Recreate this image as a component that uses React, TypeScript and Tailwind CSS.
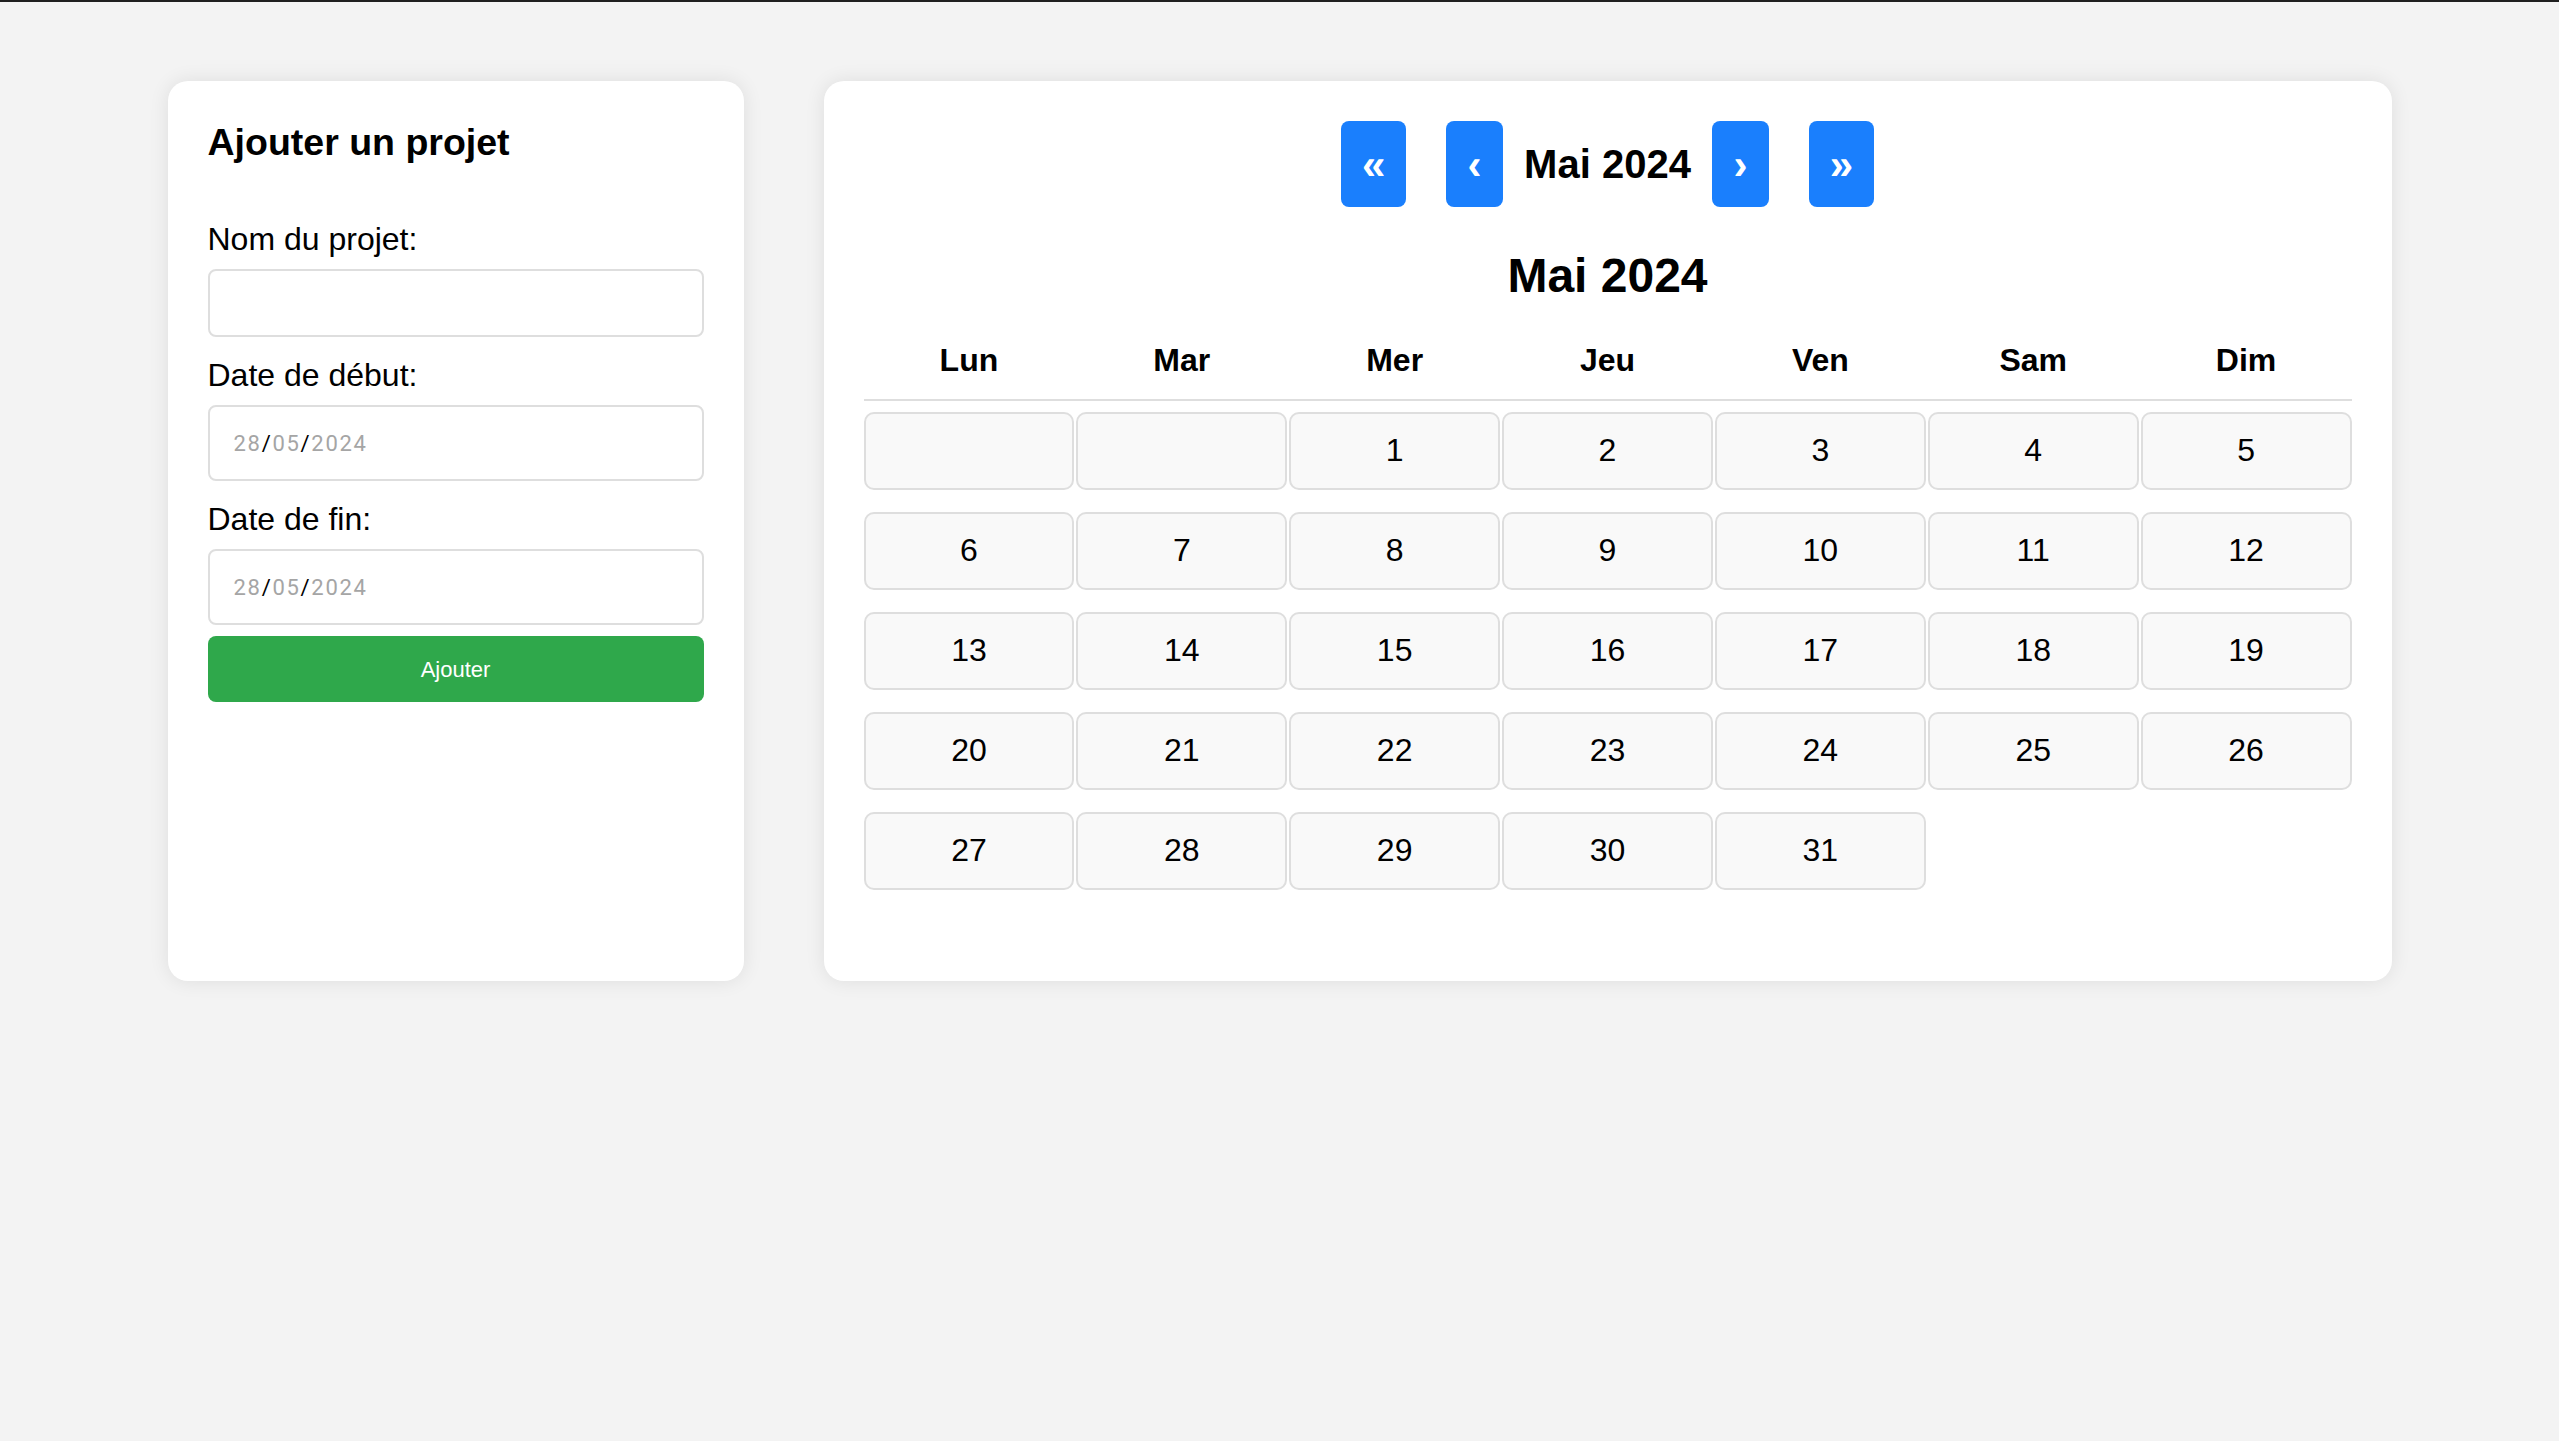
import React from 'react';

const weekdays = ['Lun', 'Mar', 'Mer', 'Jeu', 'Ven', 'Sam', 'Dim'];

// mai 2024 starts on a Wednesday
const days: (number | null)[] = [null, null, ...Array.from({ length: 31 }, (_, i) => i + 1)];

function DateField() {
  return (
    <div className="h-[76px] w-full rounded-[8px] border-2 border-[#dedede] bg-white flex items-center pl-[24px] mb-[10px] font-['Roboto',sans-serif] text-[22px] tracking-[1.7px] text-[#a5a5a5]">
      <span>28</span>
      <span className="text-black">/</span>
      <span>05</span>
      <span className="text-black">/</span>
      <span>2024</span>
    </div>
  );
}

function NavButton({ label, wide }: { label: string; wide?: boolean }) {
  return (
    <button
      className={`${wide ? 'w-[65px]' : 'w-[57px]'} h-[86px] rounded-[8px] bg-[#1a7ffd] text-white text-[42px] font-bold leading-none flex items-center justify-center pt-[2px]`}
    >
      {label}
    </button>
  );
}

export default function App() {
  return (
    <div className="min-h-screen bg-[#f3f3f3] font-['Liberation_Sans',Arial,sans-serif] text-black">
      <div className="h-[2px] bg-[#1f1f1f]" />
      <div className="flex justify-center gap-[80px] pt-[79px]">
        {/* Formulaire */}
        <div className="w-[576px] h-[900px] bg-white rounded-[20px] shadow-[0_0_20px_rgba(0,0,0,0.09)] px-[40px] pt-[40px] flex flex-col">
          <h2 className="text-[37.5px] font-bold leading-[43px] mb-[47px]">Ajouter un projet</h2>

          <label className="block text-[32px] leading-[37px] mt-[10px] mb-[11px]">Nom du projet:</label>
          <input
            type="text"
            className="h-[68px] w-full rounded-[8px] border-2 border-[#dedede] bg-white mb-[10px] px-[20px] text-[28px] outline-none"
          />

          <label className="block text-[32px] leading-[37px] mt-[10px] mb-[11px]">Date de début:</label>
          <DateField />

          <label className="block text-[32px] leading-[37px] mt-[10px] mb-[11px]">Date de fin:</label>
          <DateField />

          <button className="h-[66px] w-full rounded-[8px] bg-[#2fa84b] text-white text-[22px] mt-px">
            Ajouter
          </button>
        </div>

        {/* Calendrier */}
        <div className="w-[1568px] h-[900px] bg-white rounded-[20px] shadow-[0_0_20px_rgba(0,0,0,0.09)] px-[40px] pt-[40px] flex flex-col">
          <div className="flex items-center justify-center">
            <NavButton label="«" wide />
            <div className="w-[40px]" />
            <NavButton label="‹" />
            <span className="mx-[21px] text-[40px] font-bold leading-[46px]">Mai 2024</span>
            <NavButton label="›" />
            <div className="w-[40px]" />
            <NavButton label="»" wide />
          </div>

          <h2 className="mt-[41px] text-center text-[48px] font-bold leading-[55px]">Mai 2024</h2>

          <div className="mt-[39px] grid grid-cols-7 gap-x-[2px] border-b-2 border-[#dedede] pb-[20px]">
            {weekdays.map(d => (
              <div key={d} className="text-center text-[32px] font-bold leading-[37px]">{d}</div>
            ))}
          </div>

          <div className="mt-[11px] grid grid-cols-7 gap-x-[2px] gap-y-[22px]">
            {days.map((d, i) => (
              <div
                key={i}
                className="h-[78px] rounded-[10px] border-2 border-[#dedede] bg-[#f9f9f9] flex items-center justify-center text-[32px] pb-[2px]"
              >
                {d ?? ''}
              </div>
            ))}
          </div>
        </div>
      </div>
    </div>
  );
}
